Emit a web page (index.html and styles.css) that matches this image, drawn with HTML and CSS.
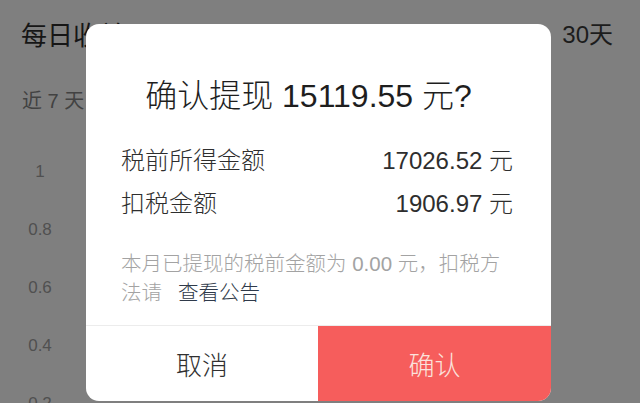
FILE: index.html
```html
<!DOCTYPE html>
<html lang="zh">
<head>
<meta charset="utf-8">
<link rel="stylesheet" href="styles.css">
</head>
<body>
<div class="page">
  <div class="header">
    <div class="h-title">每日收益</div>
    <div class="h-range">30天</div>
  </div>
  <div class="sub">近 7 天</div>
  <div class="axis">
    <div class="tick">1</div>
    <div class="tick">0.8</div>
    <div class="tick">0.6</div>
    <div class="tick">0.4</div>
    <div class="tick">0.2</div>
  </div>

  <div class="modal">
    <div class="m-title">确认提现 15119.55 元?</div>
    <div class="rows">
      <div class="row"><span>税前所得金额</span><span>17026.52 元</span></div>
      <div class="row"><span>扣税金额</span><span>1906.97 元</span></div>
    </div>
    <div class="note">本月已提现的税前金额为 0.00 元，扣税方法请<span class="link">查看公告</span></div>
    <div class="buttons">
      <div class="btn cancel">取消</div>
      <div class="btn ok">确认</div>
    </div>
  </div>
</div>
</body>
</html>
```

FILE: styles.css
```css
html, body {
  margin: 0;
  padding: 0;
}
body {
  width: 640px;
  height: 403px;
  overflow: hidden;
  background: #7f7f7f;
  font-family: "Liberation Sans", "Noto Sans CJK SC", sans-serif;
}
.page {
  position: relative;
  width: 640px;
  height: 403px;
  overflow: hidden;
}
.header {
  display: flex;
  justify-content: space-between;
  align-items: flex-start;
  padding: 18px 27px 0 21px;
}
.h-title {
  font-size: 26px;
  line-height: 36px;
  color: #161616;
}
.h-range {
  font-size: 24px;
  line-height: 34px;
  color: #1c1c1c;
}
.sub {
  padding: 34px 0 0 22px;
  font-size: 20px;
  line-height: 26px;
  color: #424242;
}
.axis {
  display: flex;
  flex-direction: column;
  padding: 48px 0 0 0;
  width: 80px;
}
.tick {
  height: 58px;
  line-height: 20px;
  font-size: 17px;
  color: #505050;
  text-align: center;
  flex-shrink: 0;
}
.modal {
  position: absolute;
  left: 86px;
  top: 24px;
  width: 465px;
  height: 377px;
  background: #fff;
  border-radius: 13px;
  display: flex;
  flex-direction: column;
  overflow: hidden;
  font-weight: 300;
}
.m-title {
  margin-top: 52px;
  padding-right: 20px;
  font-size: 32px;
  line-height: 40px;
  color: #1e1e1e;
  text-align: center;
}
.rows {
  margin-top: 23px;
  padding: 0 38px 0 35px;
}
.row {
  display: flex;
  justify-content: space-between;
  font-size: 24px;
  line-height: 43px;
  color: #2e2e2e;
}
.note {
  margin-top: 24px;
  padding: 0 36px 0 35px;
  font-size: 20.5px;
  line-height: 29px;
  color: #a3a3a3;
}
.link {
  color: #2f3a4a;
  margin-left: 16px;
}
.buttons {
  margin-top: auto;
  height: 75px;
  display: grid;
  grid-template-columns: 232px 1fr;
  border-top: 1px solid #ececec;
}
.btn {
  display: flex;
  align-items: center;
  justify-content: center;
  font-size: 26px;
}
.cancel {
  color: #303030;
}
.ok {
  background: #f65d5c;
  color: #fbe2dc;
}
```
